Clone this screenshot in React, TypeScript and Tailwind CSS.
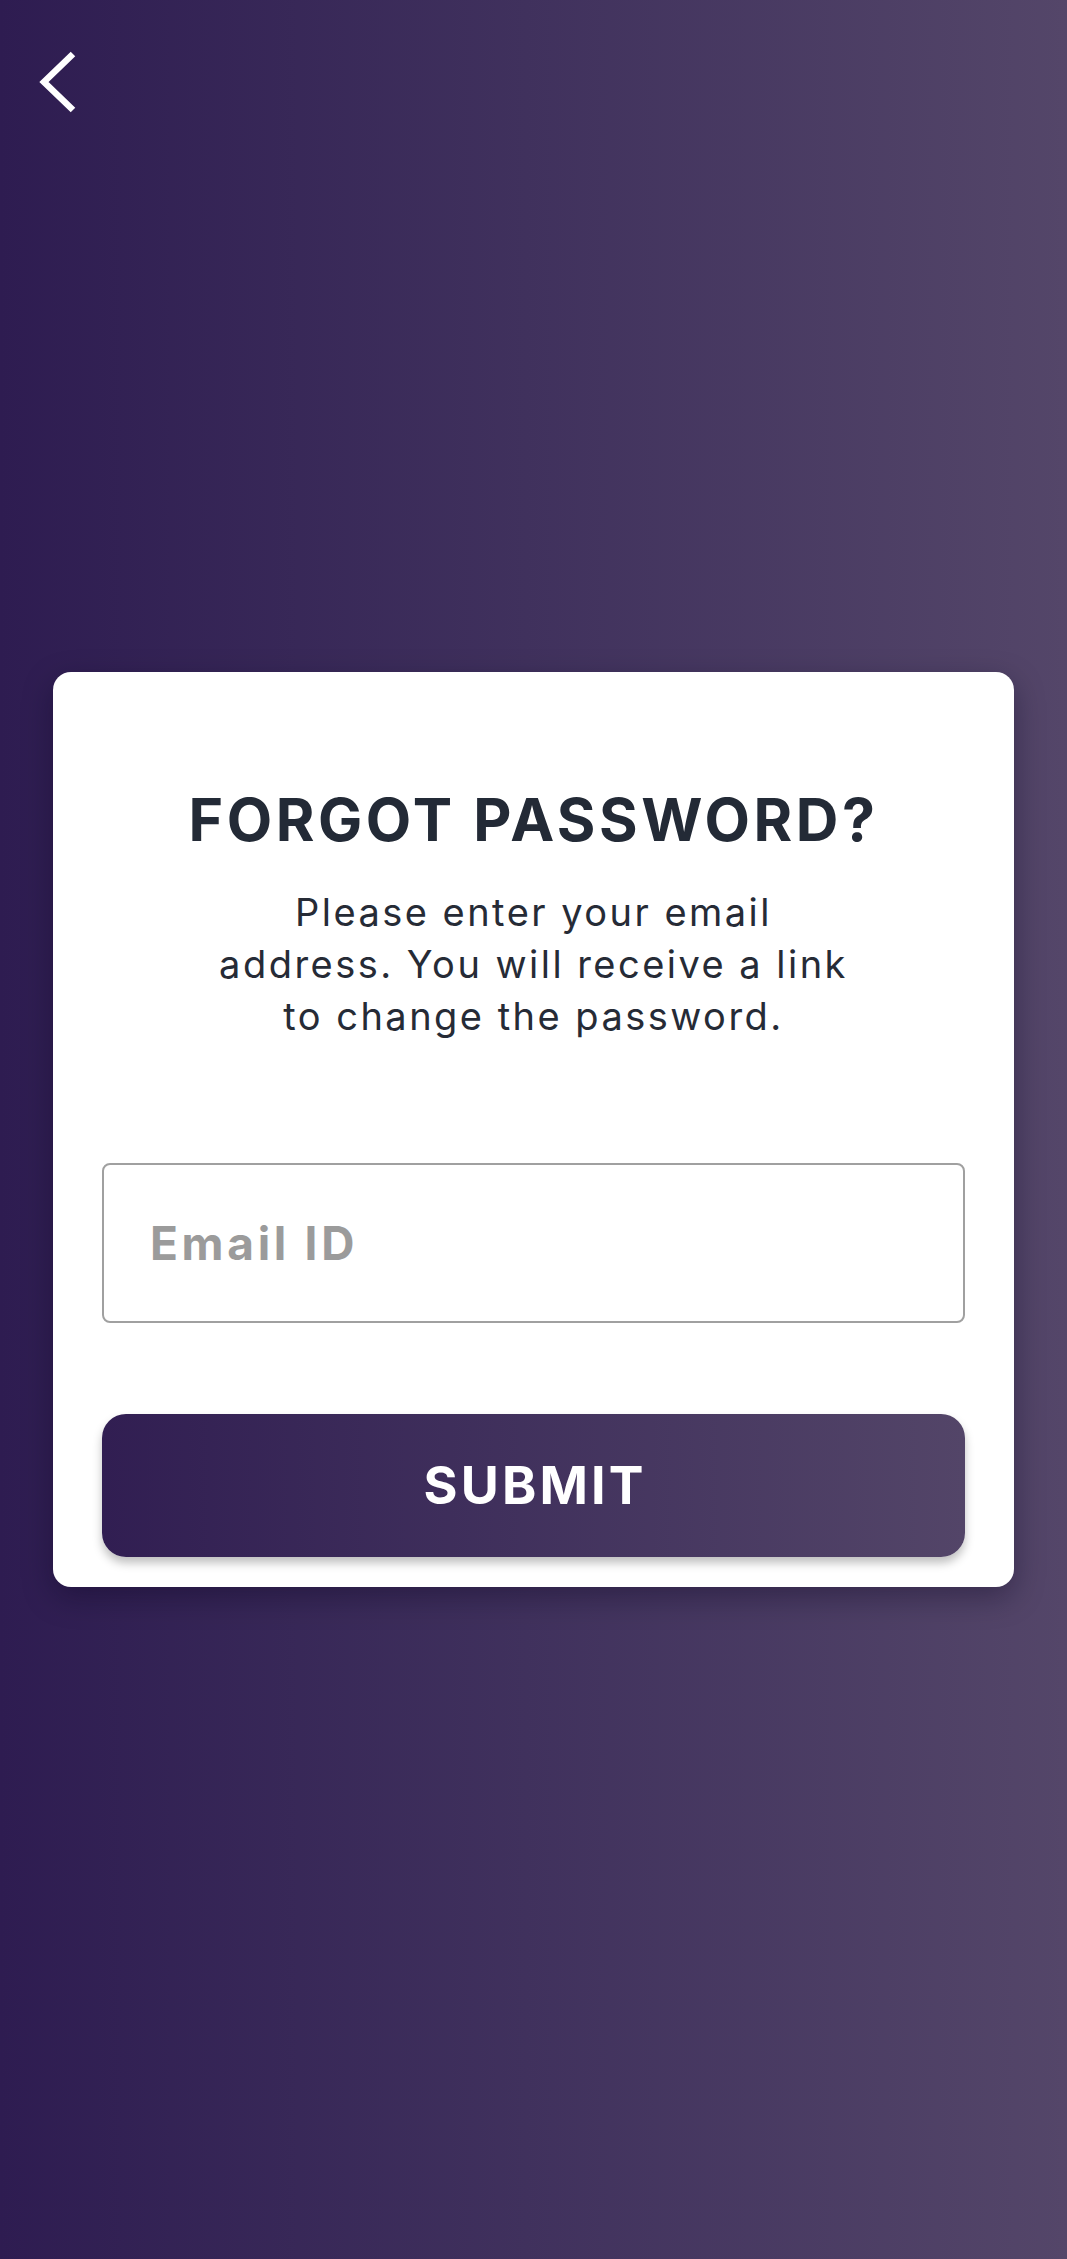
import { useState } from 'react';

function BackIcon() {
  return (
    <svg width="40" height="66" viewBox="0 0 40 66" fill="none">
      <polyline points="35,5 6,33 35,61" stroke="white" strokeWidth="6.5" strokeLinecap="butt" strokeLinejoin="miter" />
    </svg>
  );
}

export default function App() {
  const [email, setEmail] = useState('');

  return (
    <div className="relative flex min-h-screen w-full items-center justify-center bg-linear-to-r from-[#2e1c51] to-[#544669] px-[53px] font-['Inter',sans-serif]">
      <button className="absolute left-[38px] top-[49px]" aria-label="Back">
        <BackIcon />
      </button>

      <div className="flex w-full flex-col items-center rounded-[18px] bg-white px-[49px] pt-[113px] pb-[30px] shadow-[0_10px_30px_rgba(10,0,30,0.35)]">
        <h1 className="text-center text-[59px] font-bold leading-[70px] tracking-[0.06em] text-[#232a36]">
          FORGOT PASSWORD?
        </h1>
        <p className="mt-[31px] text-center text-[38px] leading-[52px] tracking-[0.065em] text-[#262b36]">
          Please enter your email
          <br />
          address. You will receive a link
          <br />
          to change the password.
        </p>

        <input
          value={email}
          onChange={(e) => setEmail(e.target.value)}
          placeholder="Email ID"
          className="mt-[121px] h-[160px] w-full rounded-[8px] border-2 border-[#a0a0a0] pl-[46px] text-[46px] font-bold tracking-[0.08em] text-[#333] outline-none placeholder:text-[#9b9b9b]"
        />

        <button className="mt-[91px] h-[143px] w-full rounded-[24px] bg-linear-to-r from-[#311e52] to-[#534568] pl-[0.06em] text-[52px] font-bold tracking-[0.06em] text-white shadow-[0_6px_10px_rgba(0,0,0,0.25)]">
          SUBMIT
        </button>
      </div>
    </div>
  );
}
